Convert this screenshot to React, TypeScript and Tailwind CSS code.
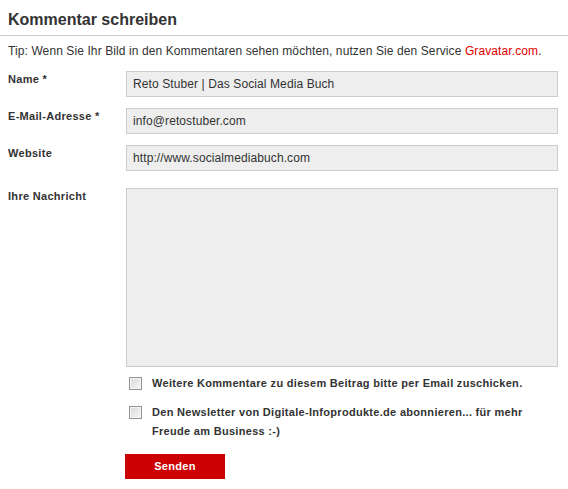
import React from "react";

function Row({ label, value }: { label: string; value: string }) {
  return (
    <div className="flex">
      <label className="w-[126px] shrink-0 pl-2 pt-[1px] text-[11px] font-bold leading-[14px] tracking-[0.3px]">{label}</label>
      <input
        readOnly
        defaultValue={value}
        className="h-[26px] w-[432px] border border-[#cccccc] bg-[#eeeeee] px-[6px] text-[12px] leading-[24px] tracking-[0.1px] text-[#333] outline-none"
      />
    </div>
  );
}

function Box() {
  return (
    <span className="mt-[3px] block h-[13px] w-[13px] shrink-0 border border-[#939393] bg-gradient-to-br from-[#d8d8d8] to-[#f8f8f8] shadow-[inset_0_0_0_1px_#f4f4f4]" />
  );
}

export default function App() {
  return (
    <div className="h-[489px] w-[568px] bg-white font-['Liberation_Sans',Arial,sans-serif] text-[#333]">
      <h2 className="box-border h-[36px] border-b border-[#cccccc] pl-2 pt-[10px] text-[16px] font-bold leading-5">
        Kommentar schreiben
      </h2>
      <p className="mt-[6px] pl-2 text-[12px] leading-[18px] tracking-[0.1px]">
        Tip: Wenn Sie Ihr Bild in den Kommentaren sehen möchten, nutzen Sie den Service{" "}
        <span className="text-[#dd0000]">Gravatar.com</span>.
      </p>
      <div className="mt-[11px] flex flex-col gap-[11px]">
        <Row label="Name *" value="Reto Stuber | Das Social Media Buch" />
        <Row label="E-Mail-Adresse *" value="info@retostuber.com" />
        <Row label="Website" value="http://www.socialmediabuch.com" />
      </div>
      <div className="mt-[17px] flex">
        <label className="w-[126px] shrink-0 pl-2 pt-[1px] text-[11px] font-bold leading-[14px] tracking-[0.3px]">Ihre Nachricht</label>
        <textarea
          readOnly
          className="h-[179px] w-[432px] resize-none border border-[#cccccc] bg-[#eeeeee] outline-none"
        />
      </div>
      <div className="ml-[129px] mt-[7px] flex w-[429px] flex-col gap-[10px] text-[11px] font-bold leading-[19px] tracking-[0.3px]">
        <div className="flex gap-[10px]">
          <Box />
          <span>Weitere Kommentare zu diesem Beitrag bitte per Email zuschicken.</span>
        </div>
        <div className="flex gap-[10px]">
          <Box />
          <span>Den Newsletter von Digitale-Infoprodukte.de abonnieren... für mehr Freude am Business :-)</span>
        </div>
      </div>
      <button className="ml-[125px] mt-[13px] block h-[25px] w-[100px] bg-[#cc0000] text-[11px] font-bold tracking-[0.3px] text-white">
        Senden
      </button>
    </div>
  );
}
